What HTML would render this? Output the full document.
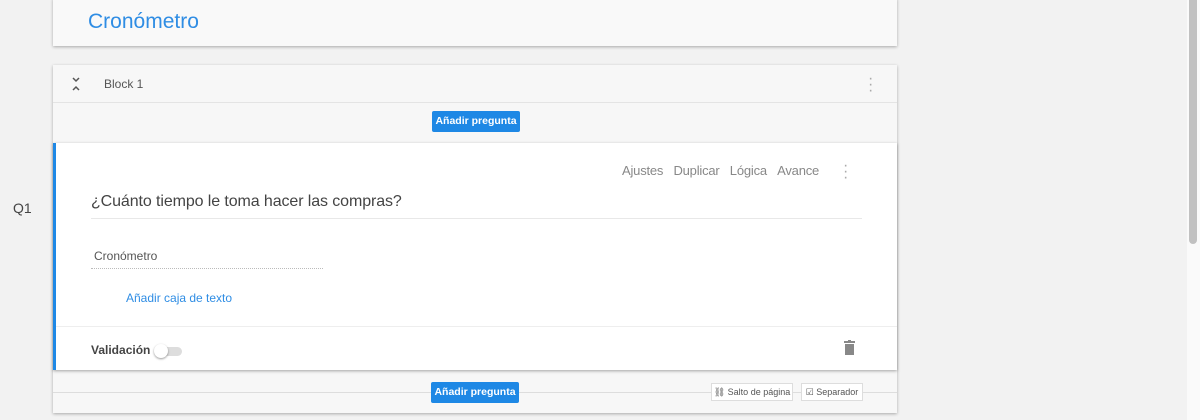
<!DOCTYPE html><html><head><style>
body{margin:0;width:1200px;height:420px;background:#f2f2f2;font-family:"Liberation Sans",sans-serif;position:relative;overflow:hidden}
.a{position:absolute}
.btn{position:absolute;background:#1e88e5;color:#fff;font-size:10.5px;font-weight:bold;border-radius:2px;text-align:center;line-height:21px;width:88px;height:21px}
</style></head><body>
<div class="a" style="left:53px;top:-2px;width:844px;height:48px;background:#f9f9f9;box-shadow:0 1px 3px rgba(0,0,0,.3)"></div>
<div class="a" style="left:88px;top:10px;font-size:21px;color:#2f8de4">Cronómetro</div>
<div class="a" style="left:53px;top:65px;width:844px;height:348px;background:#f7f7f7;box-shadow:0 1px 3px rgba(0,0,0,.3)"></div>
<div class="a" style="left:53px;top:102px;width:844px;height:1px;background:#e4e4e4"></div>
<svg class="a" style="left:71px;top:77px" width="10" height="14" viewBox="0 0 10 14"><path d="M2 1l3 3 3-3M2 13l3-3 3 3" fill="none" stroke="#555" stroke-width="1.5"/></svg>
<div class="a" style="left:104px;top:77px;font-size:12px;color:#555">Block 1</div>
<div class="a" style="left:868px;top:76px;color:#aaa;font-size:16px;line-height:6px">·<br>·<br>·</div>
<div class="btn" style="left:432px;top:111px">Añadir pregunta</div>
<div class="a" style="left:53px;top:143px;width:844px;height:227px;background:#fff;border-left:3px solid #1e88e5;box-sizing:border-box;box-shadow:0 1px 3px rgba(0,0,0,.35)"></div>
<div class="a" style="left:622px;top:163px;font-size:13px;color:#888;letter-spacing:-0.2px">Ajustes&nbsp;&nbsp;&nbsp;Duplicar&nbsp;&nbsp;&nbsp;Lógica&nbsp;&nbsp;&nbsp;Avance</div>
<div class="a" style="left:843px;top:163px;color:#aaa;font-size:16px;line-height:6px">·<br>·<br>·</div>
<div class="a" style="left:91px;top:193px;font-size:16px;color:#444;letter-spacing:-0.1px">¿Cuánto tiempo le toma hacer las compras?</div>
<div class="a" style="left:91px;top:218px;width:771px;height:1px;background:#e8e8e8"></div>
<div class="a" style="left:13px;top:200px;font-size:14px;color:#444">Q1</div>
<div class="a" style="left:94px;top:249px;font-size:12px;color:#555">Cronómetro</div>
<div class="a" style="left:91px;top:268px;width:232px;border-top:1px dotted #bbb"></div>
<div class="a" style="left:126px;top:291px;font-size:12px;color:#2f8de4">Añadir caja de texto</div>
<div class="a" style="left:56px;top:326px;width:841px;height:1px;background:#eee"></div>
<div class="a" style="left:91px;top:343px;font-size:12px;font-weight:bold;color:#444">Validación</div>
<div class="a" style="left:157px;top:347px;width:25px;height:9px;border-radius:5px;background:#ddd"></div>
<div class="a" style="left:154px;top:344px;width:14px;height:14px;border-radius:50%;background:#fff;box-shadow:0 1px 2px rgba(0,0,0,.4)"></div>
<svg class="a" style="left:843px;top:340px" width="13" height="15" viewBox="0 0 13 15"><rect x="1" y="1" width="11" height="2" fill="#888"/><rect x="5" y="0" width="3" height="2" fill="#888"/><rect x="2" y="4" width="9" height="11" fill="#888"/></svg>
<div class="a" style="left:53px;top:392px;width:844px;height:1px;background:#ddd"></div>
<div class="btn" style="left:431px;top:382px">Añadir pregunta</div>
<div class="a" style="left:711px;top:383px;height:16px;width:80px;background:#fff;border:1px solid #ddd;font-size:9px;color:#555;line-height:16px;text-align:center">⛓ Salto de página</div>
<div class="a" style="left:801px;top:383px;height:16px;width:60px;background:#fff;border:1px solid #ddd;font-size:9px;color:#555;line-height:16px;text-align:center">☑ Separador</div>
<div class="a" style="left:1187px;top:0;width:13px;height:420px;background:#fafafa"></div>
<div class="a" style="left:1189px;top:-4px;width:8px;height:248px;border-radius:4px;background:#c1c1c1"></div>
</body></html>
